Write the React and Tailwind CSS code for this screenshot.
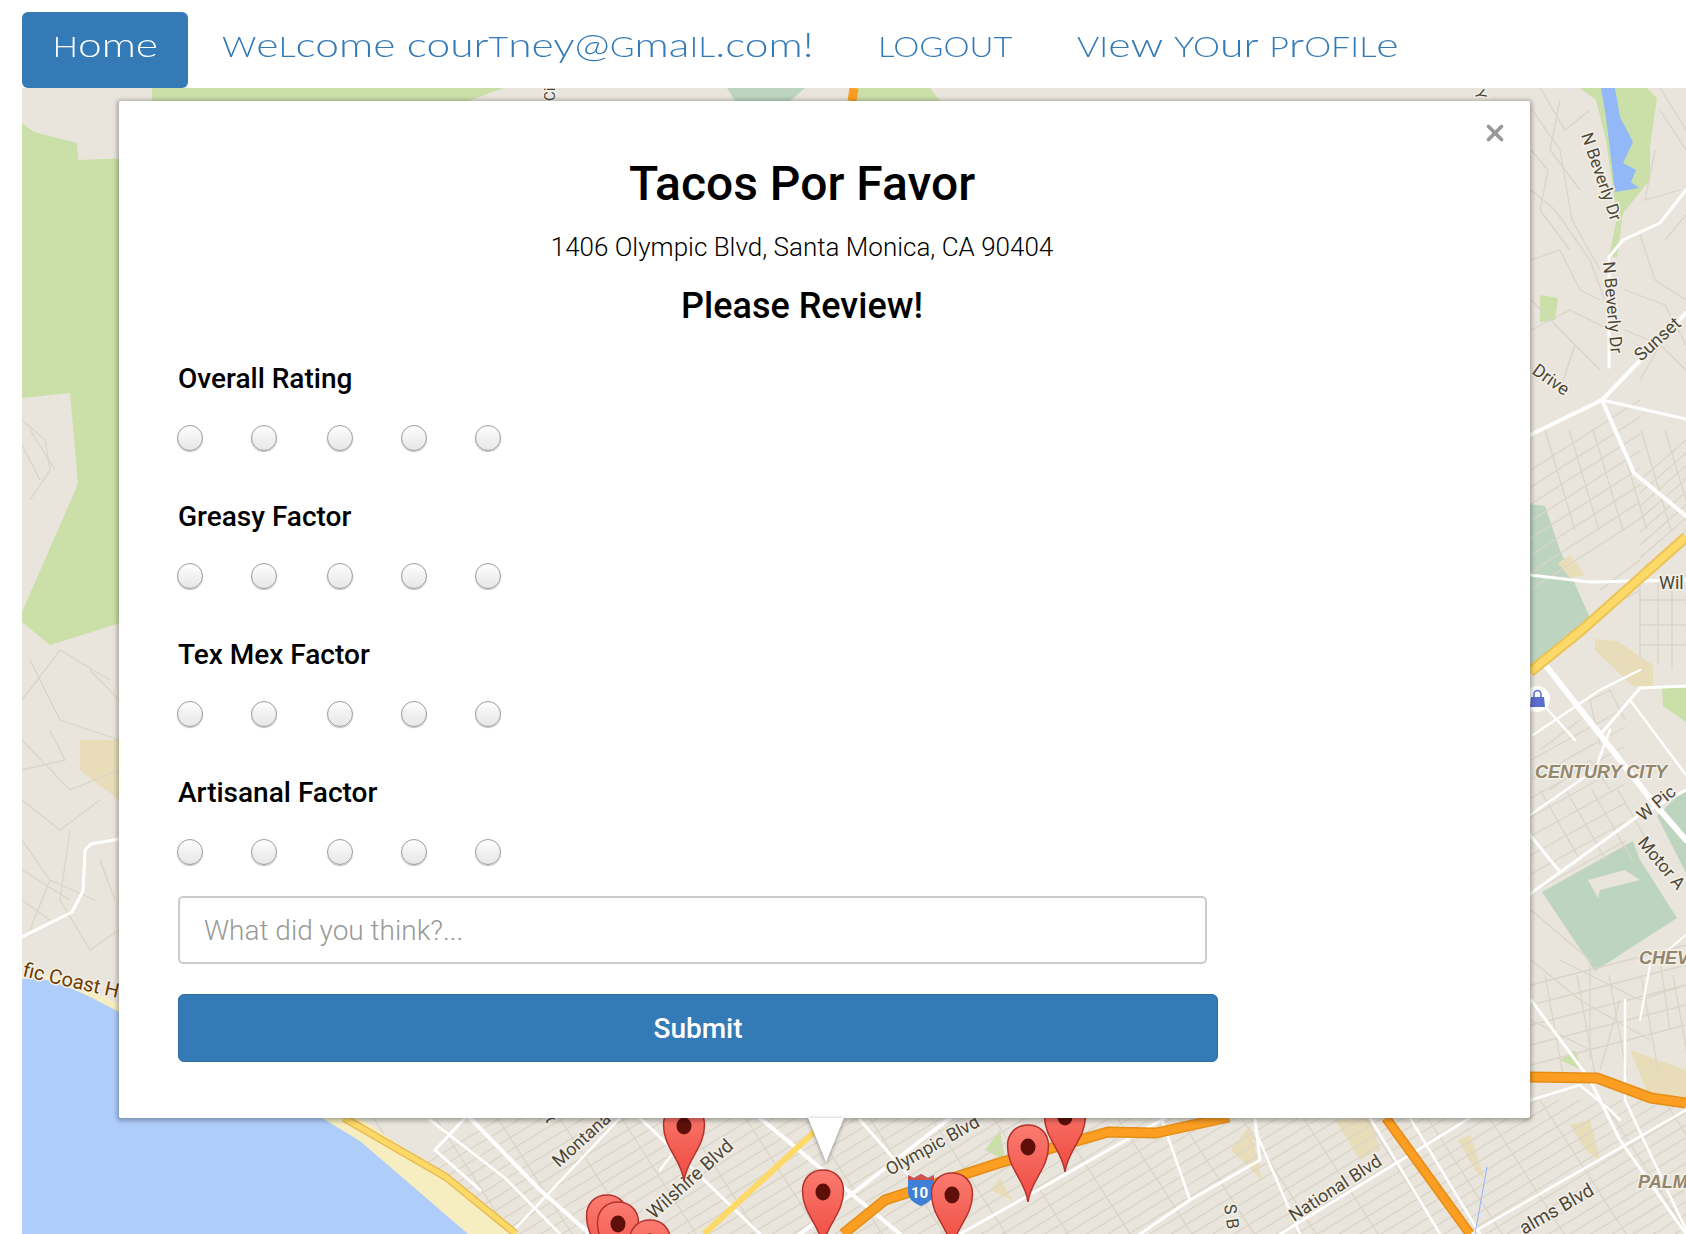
import { X } from "lucide-react";

const factors = ["Overall Rating", "Greasy Factor", "Tex Mex Factor", "Artisanal Factor"];

const pins = [
  [684, 1103],
  [1065, 1094],
  [1028, 1124],
  [823, 1169],
  [952, 1172],
  [607, 1194],
  [618, 1201],
  [650, 1219],
];

// thin street lines, [x, y, x, y]
const range = (from, to, step) => {
  const out = [];
  for (let v = from; v < to; v += step) out.push(v);
  return out;
};

const streetsA = range(300, 2300, 21).map((x) => [x, 1240, x + 230, 1100]);
const streetsB = range(300, 1800, 62).map((x) => [x, 1100, x + 90, 1240]);
const hillsideA = range(0, 8, 1).map((i) => [1531, 470 + i * 17, 1640, 400 + i * 17]);
const hillsideB = range(1545, 1690, 24).map((x) => [x, 430, x + 30, 530]);
const centuryA = range(760, 900, 19).map((y) => [1531, y, 1625, y - 52]);
const centuryB = range(1540, 1620, 26).map((x) => [x, 790, x + 40, 860]);
const southA = range(985, 1075, 20).map((y) => [1531, y, 1686, y - 40]);
const southB = range(1545, 1686, 32).map((x) => [x, 975, x + 18, 1075]);
const northA = range(420, 530, 13).map((y) => [1640, y + 60, 1686, y + 20]);

const hills = [
  "M1531 108L1560 150L1572 220L1600 270",
  "M1540 88L1565 130L1590 110",
  "M1660 88L1686 130",
  "M1531 190L1555 210L1590 260L1605 300",
  "M1531 260L1560 250L1580 290L1600 300",
  "M1531 150L1548 170L1540 210L1570 250",
  "M1560 100L1550 150L1580 190",
  "M1655 150L1645 200L1680 190",
  "M1660 110L1686 150M1665 240L1686 215",
  "M1531 330L1570 310L1610 330",
  "M1531 300L1575 345L1560 390",
  "M1575 345L1600 370",
  "M1640 235L1655 280L1686 300",
  "M1625 290L1665 305L1686 345",
  "M1625 330L1660 345L1640 380",
  "M1660 345L1686 370",
  "M1640 580L1640 660M1658 580L1658 665M1672 580L1672 670M1640 600L1686 600M1640 625L1686 625M1640 645L1686 645",
  "M1600 590L1640 560M1605 610L1640 590",
  "M1540 750L1580 720M1550 790L1590 760L1610 790",
  "M1600 745L1590 700L1610 690L1625 720",
  "M1531 910L1590 960L1590 1060M1560 960L1640 1000L1686 985",
  "M1531 960L1580 1000L1650 1040M1620 1000L1600 1070",
  "M1660 960L1670 1030M1531 1020L1590 1050",
  "M22 420L45 440L50 470L30 500",
  "M22 445L40 480M30 430L55 470",
  "M22 700L60 650L110 680",
  "M30 660L60 720L119 740",
  "M22 740L70 790L119 770",
  "M22 770L65 760L50 730",
  "M22 800L60 830L100 800",
  "M22 840L50 880L95 900M50 880L30 930",
  "M70 830L60 900L90 950L119 930",
  "M22 900L50 920M22 870L70 900",
  "M100 860L115 900M90 670L119 700",
];

const whiteRoads = [
  ["M1530 435L1602 400L1686 313", 4],
  ["M1602 400L1686 419", 3],
  ["M1602 400L1634 473L1686 516", 4],
  ["M1609 367L1609 257L1623 240L1660 223L1686 190", 3],
  ["M1530 575L1590 582L1686 580", 3],
  ["M1547 667L1653 802", 6],
  ["M1653 802L1686 840", 6],
  ["M1530 894L1638 816L1686 790", 3],
  ["M1533 735L1600 690L1640 670", 2.5],
  ["M1530 690L1575 740", 2.5],
  ["M1600 735L1640 688L1686 686", 3],
  ["M1630 700L1686 775", 2.5],
  ["M1530 815L1595 770L1610 730", 2.5],
  ["M1530 835L1560 872", 3],
  ["M1686 935L1650 965L1640 1020", 2],
  ["M22 937L72 912L83 891L85 850L91 844L119 839", 3],
  ["M430 1120L505 1178L560 1234", 2.5],
  ["M465 1118L435 1150L480 1190", 3],
  ["M470 1118L540 1190L590 1234", 4],
  ["M510 1234L620 1118", 2.5],
  ["M640 1118L760 1234", 3],
  ["M700 1118L660 1170", 2.5],
  ["M760 1118L900 1234", 4],
  ["M800 1234L950 1118", 4],
  ["M860 1120L960 1234", 3],
  ["M960 1234L1165 1118", 3],
  ["M1162 1120L1190 1200", 2.5],
  ["M1255 1118L1260 1160L1190 1200L1140 1234", 3],
  ["M1255 1130L1300 1234", 2.5],
  ["M1280 1234L1450 1130L1531 1080", 3],
  ["M1370 1118L1440 1234", 2.5],
  ["M1410 1118L1480 1234", 2.5],
  ["M1531 1000L1590 1080L1620 1140L1686 1234", 3],
  ["M1531 1100L1580 1085L1610 1110L1620 1120", 2.5],
  ["M1625 1000L1625 1100L1686 1230", 2.5],
  ["M1470 1234L1686 1110", 2.5],
];

const labels = [
  ["Ci", 555, 101, -90, 15],
  ["Y", 1474, 92, 70, 15],
  ["N Beverly Dr", 1581, 135, 71, 17],
  ["N Beverly Dr", 1603, 262, 85, 17],
  ["Sunset", 1641, 362, -42, 18],
  ["Drive", 1531, 373, 35, 18],
  ["Wil", 1659, 589, 0, 18],
  ["W Pic", 1643, 822, -40, 17.5],
  ["Motor A", 1637, 843, 50, 17.5],
  ["Montana", 559, 1168, -42, 18],
  ["St", 540, 1110, 62, 17],
  ["Wilshire Blvd", 654, 1220, -42, 19],
  ["Olympic Blvd", 890, 1176, -29, 18],
  ["S B", 1224, 1205, 82, 17],
  ["National Blvd", 1294, 1222, -33, 18],
  ["alms Blvd", 1524, 1235, -30, 19],
];

const areas = [
  ["M22 123L34 132L77 143L78.5 160L130 158V620L50 645L22 622Z", "#cbdfa9"],
  ["M22 398L70 393L78 484L22 612Z", "#e9e5dc"],
  ["M152 88H504L468 101H152Z", "#cbdfa9"],
  ["M727 88H805L790 101H735Z", "#bdd4bf"],
  ["M856 88H930L940 101H856Z", "#cbdfa9"],
  ["M80 740H119V800L80 770Z", "#e8dcb9"],
  ["M1580 88H1647L1657 98L1650 147L1650 180L1623 213L1617 257L1609 257L1617 217L1606 140L1596 100Z", "#cbdfa9"],
  ["M1601 88H1615L1620 117L1633 142L1623 163L1636 170L1631 182L1639 188L1615 192L1612 167L1606 117Z", "#93b8f8"],
  ["M1540 295L1558 298L1555 320L1540 322Z", "#cbdfa9"],
  ["M1530 504L1545 506L1560 550L1590 618L1530 670Z", "#bdd4bf"],
  ["M1558 563L1570 555L1585 575L1570 578Z", "#e8dcb9"],
  ["M1595 639L1617 641L1653 665V686H1633L1595 650Z", "#e8dcb9"],
  ["M1662 688H1686V722L1663 706Z", "#cbdfa9"],
  ["M1542 892L1633 841L1640 860L1677 918L1595 971Z", "#bdd4bf"],
  ["M1588 880L1625 870L1640 880L1600 890L1598 898Z", "#e9e5dc"],
  ["M1657 816L1686 788V873Z", "#bdd4bf"],
  ["M1231 1150L1250 1125L1262 1180Z", "#e8dcb9"],
  ["M1335 1120L1370 1118L1380 1150L1360 1160Z", "#e8dcb9"],
  ["M1458 1140L1470 1135L1485 1180L1475 1170Z", "#e8dcb9"],
  ["M1570 1125L1590 1120L1600 1160L1585 1150Z", "#e8dcb9"],
  ["M1630 1050L1686 1070V1100L1650 1098Z", "#e8dcb9"],
  ["M1560 1060L1575 1050L1582 1070Z", "#cbdfa9"],
  ["M985 1150L1000 1130L1005 1160Z", "#cbdfa9"],
  ["M990 1190L1000 1178L1012 1200Z", "#e8dcb9"],
];

const Pin = ({ x, top }) => (
  <g transform={`translate(${x - 21.5} ${top})`}>
    <path
      d="M21.5 78C19 56 1 45 1 22C1 9 10 1 21.5 1C33 1 42 9 42 22C42 45 24 56 21.5 78Z"
      fill="url(#pinFill)"
      stroke="#b3322b"
      strokeWidth="1.5"
    />
    <ellipse cx="21.5" cy="23" rx="7.5" ry="8.5" fill="#5e0f0a" />
  </g>
);

const MapBackdrop = () => (
  <svg className="absolute inset-0" width="1664" height="1146" viewBox="22 88 1664 1146">
    <defs>
      <linearGradient id="pinFill" x1="0" y1="0" x2="0" y2="1">
        <stop offset="0" stopColor="#fb7b70" />
        <stop offset="1" stopColor="#ee4a3f" />
      </linearGradient>
    </defs>
    <rect x="22" y="88" width="1664" height="1146" fill="#e9e5dc" />

    {areas.map(([d, fill]) => (
      <path key={d} d={d} fill={fill} />
    ))}

    <g stroke="#d9d5c9" strokeWidth="1.3" fill="none">
      {[...streetsA, ...streetsB, ...hillsideA, ...hillsideB, ...centuryA, ...centuryB, ...southA, ...southB, ...northA].map(([a, b, c, d]) => (
        <line key={`${a}-${b}-${c}`} x1={a} y1={b} x2={c} y2={d} />
      ))}
      {hills.map((d) => (
        <path key={d} d={d} />
      ))}
    </g>

    <path d="M22 975L60 976L119 1004L119 1040L360 1118L446 1177L516 1234H22Z" fill="#f6edc0" />
    <path d="M22 979C40 976 60 980 119 1012V1110L322 1118L360 1141L468 1234H22Z" fill="#aecdfb" />

    <g fill="none" stroke="#fff" strokeLinecap="round" strokeLinejoin="round">
      {whiteRoads.map(([d, w]) => (
        <path key={d} d={d} strokeWidth={w} />
      ))}
    </g>

    <g fill="none" strokeLinejoin="round">
      <path d="M344 1118L446 1177L516 1234" stroke="#e8bc55" strokeWidth="8" />
      <path d="M344 1118L446 1177L516 1234" stroke="#fdd967" strokeWidth="5" />
      <path d="M704 1234L812 1134L828 1118" stroke="#fdd967" strokeWidth="6" />
      <path d="M1530 672L1583 629L1686 537" stroke="#edc356" strokeWidth="11" />
      <path d="M1530 672L1583 629L1686 537" stroke="#fdd967" strokeWidth="7" />
      <path d="M843 1234L885 1200L999 1163L1108 1132L1156 1133L1229 1117" stroke="#e58e17" strokeWidth="11" />
      <path d="M843 1234L885 1200L999 1163L1108 1132L1156 1133L1229 1117" stroke="#fb9e22" strokeWidth="8" />
      <path d="M1530 1077L1597 1078L1651 1098L1686 1103" stroke="#e58e17" strokeWidth="11" />
      <path d="M1530 1077L1597 1078L1651 1098L1686 1103" stroke="#fb9e22" strokeWidth="8" />
      <path d="M1386 1118L1470 1234" stroke="#e58e17" strokeWidth="10" />
      <path d="M1386 1118L1470 1234" stroke="#fb9e22" strokeWidth="7" />
      <path d="M854 88L852 101" stroke="#fb9e22" strokeWidth="9" />
    </g>

    <path d="M1487 1167L1475 1234" fill="none" stroke="#8fb5f8" strokeWidth="1" />

    <g fontFamily="Roboto, sans-serif" fill="#4d4738" stroke="#f3f0e9" strokeWidth="3" paintOrder="stroke">
      {labels.map(([text, x, y, angle, size]) => (
        <text key={text + x} x={x} y={y} fontSize={size} transform={`rotate(${angle} ${x} ${y})`}>
          {text}
        </text>
      ))}
      <text x="22" y="976" fontSize="20" fill="#6d3b00" transform="rotate(13 22 976)">
        fic Coast H
      </text>
    </g>
    <g fontFamily="Liberation Sans, sans-serif" fontStyle="italic" fontWeight="700" fill="#92866c" stroke="#f3f0e9" strokeWidth="3" paintOrder="stroke" fontSize="18">
      <text x="1535" y="778">CENTURY CITY</text>
      <text x="1639" y="964">CHEV</text>
      <text x="1638" y="1188">PALM</text>
    </g>

    <circle cx="1537" cy="699" r="13" fill="#fff" />
    <path d="M1531 697H1544L1545 707H1530Z" fill="#5b6dcf" />
    <path d="M1534 697V694A3.5 3.5 0 0 1 1541 694V697" fill="none" stroke="#5b6dcf" strokeWidth="1.5" />

    <path d="M908 1175L914 1178L921 1174L928 1178L934 1175V1192C934 1200 926 1204 921 1206C916 1204 908 1200 908 1192Z" fill="#3f7fd6" />
    <path d="M908 1175L914 1178L921 1174L928 1178L934 1175V1180H908Z" fill="#d4504a" />
    <text x="911" y="1198" fontFamily="Roboto, sans-serif" fontWeight="700" fontSize="15" fill="#fff">
      10
    </text>

    {pins.map(([x, top]) => (
      <Pin key={`${x}-${top}`} x={x} top={top} />
    ))}
  </svg>
);

const C = ({ children }) => <span className="text-[27px] uppercase">{children}</span>;

const NavLink = ({ width, scale, children }) => (
  <a href="#" className="block text-[#337ab7]" style={{ width }}>
    <span className="inline-block origin-left whitespace-nowrap" style={{ transform: `scaleX(${scale})` }}>
      {children}
    </span>
  </a>
);

const RatingRow = ({ name }) => (
  <div className="mb-[49px] -ml-[1px] flex gap-[48px]">
    {[1, 2, 3, 4, 5].map((value) => (
      <input
        key={value}
        type="radio"
        name={name}
        className="h-[26px] w-[26px] appearance-none rounded-full border border-[#9c9c9c] bg-linear-to-b from-white via-[#f1f1f1] to-[#e8e8e8] shadow-[0_1px_1px_rgba(0,0,0,0.25)] nth-[3]:ml-[2px]"
      />
    ))}
  </div>
);

export default function App() {
  return (
    <div className="h-[1234px] w-[1686px] overflow-hidden bg-white font-[Roboto,sans-serif] text-black">
      <nav className="flex h-[88px] items-end pl-[22px] font-[Lato,sans-serif] text-[34px] font-light leading-[40px]">
        <a href="#" className="flex h-[76px] w-[166px] items-center justify-center rounded-[6px] bg-[#337ab7] pb-[10px] text-white">
          <span className="inline-block scale-x-[1.25] whitespace-nowrap">
            <C>H</C>ome
          </span>
        </a>
        <div className="flex h-[76px] items-center pb-[10px] pl-[34px]">
          <NavLink width="656px" scale={1.25}>
            <C>W</C>e<C>l</C>come cour<C>t</C>ney@<C>g</C>ma<C>il</C>.com!
          </NavLink>
          <NavLink width="199px" scale={1.22}>
            <C>Logout</C>
          </NavLink>
          <NavLink width="322px" scale={1.26}>
            <C>Vi</C>ew <C>Yo</C>ur <C>P</C>r<C>ofil</C>e
          </NavLink>
        </div>
      </nav>

      <main className="relative ml-[22px] h-[1146px]">
        <MapBackdrop />

        <section className="absolute left-[97px] top-[13px] h-[1017px] w-[1411px] rounded-[2px] bg-white pl-[59px] pt-[51px] shadow-[0_1px_4px_2px_rgba(0,0,0,0.28)]">
          <button className="absolute right-[22px] top-[19px] text-[#999]">
            <X size={26} strokeWidth={3.5} />
          </button>

          <div className="w-[1248px] text-center">
            <h1 className="text-[48px] font-medium leading-[64px]">Tacos Por Favor</h1>
            <p className="mt-[14px] text-[26px] font-light leading-[34px]">1406 Olympic Blvd, Santa Monica, CA 90404</p>
            <h2 className="mt-[20px] text-[36px] font-medium leading-[44px]">Please Review!</h2>
          </div>

          <form className="mt-[34px]">
            {factors.map((factor) => (
              <div key={factor}>
                <label className="mb-[29px] block text-[28px] font-medium leading-[34px]">{factor}</label>
                <RatingRow name={factor} />
              </div>
            ))}
            <input
              type="text"
              placeholder="What did you think?..."
              className="-mt-[18px] block h-[68px] w-[1029px] rounded-[5px] border-2 border-[#ccc] px-[24px] text-[28px] font-light placeholder:text-[#999]"
            />
            <button type="button" className="mt-[30px] block h-[68px] w-[1040px] rounded-[6px] border border-[#2e6da4] bg-[#337ab7] pt-[2px] text-[28px] font-medium text-white">
              Submit
            </button>
          </form>

          <div className="absolute left-[689px] top-full h-0 w-0 border-x-[18px] border-t-[44px] border-x-transparent border-t-white drop-shadow-[0_1px_2px_rgba(0,0,0,0.4)]" />
        </section>
      </main>
    </div>
  );
}
